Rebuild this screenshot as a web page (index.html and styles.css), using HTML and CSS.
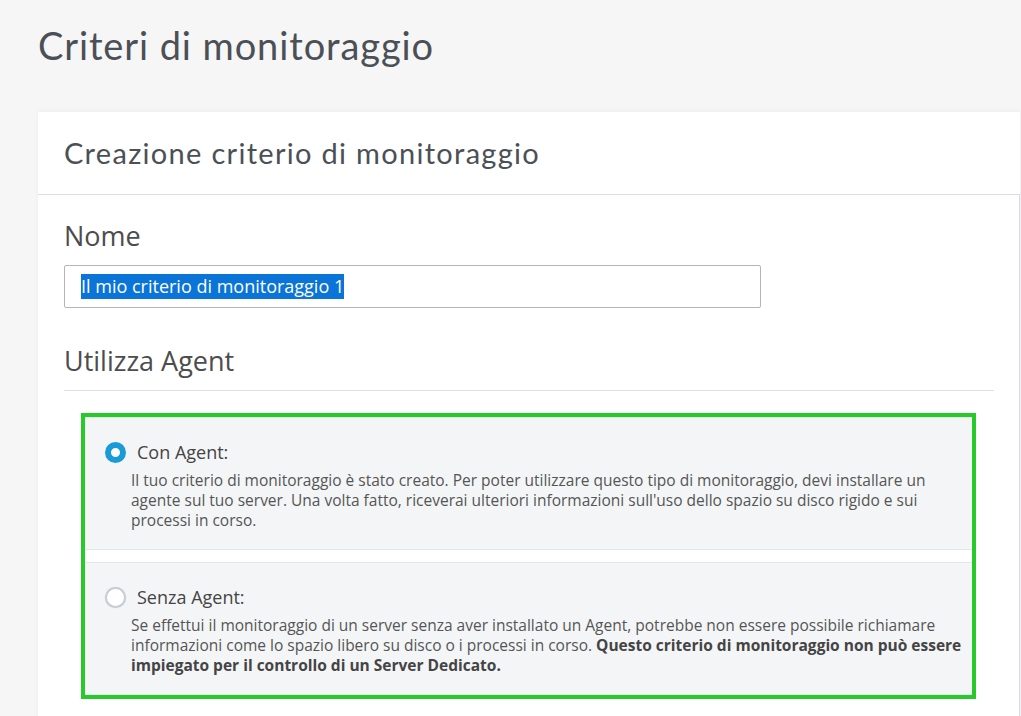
FILE: index.html
```html
<html>
<head>
    <meta charset="UTF-8">
    <meta name="viewport" content="width=device-width, initial-scale=1.0">
    <title>Criteri di monitoraggio</title>
    <link rel="stylesheet" href="styles.css">
</head>
<body>
    <h1 class="page-title">Criteri di monitoraggio</h1>

    <div class="card">
        <div class="card-header">
            <h2>Creazione criterio di monitoraggio</h2>
        </div>

        <div class="card-body">
            <label class="field-label" for="policyName">Nome</label>
            <div class="text-field" id="policyName">
                <span class="selected">Il mio criterio di monitoraggio 1</span>
            </div>

            <h3 class="section-title">Utilizza Agent</h3>

            <div class="agent-options">
                <div class="option">
                    <div class="option-head">
                        <span class="radio checked"></span>
                        <span class="option-label">Con Agent:</span>
                    </div>
                    <p class="option-text">Il tuo criterio di monitoraggio è stato creato. Per poter utilizzare questo tipo di monitoraggio, devi installare un agente sul tuo server. Una volta fatto, riceverai ulteriori informazioni sull'uso dello spazio su disco rigido e sui processi in corso.</p>
                </div>

                <div class="option">
                    <div class="option-head">
                        <span class="radio"></span>
                        <span class="option-label">Senza Agent:</span>
                    </div>
                    <p class="option-text">Se effettui il monitoraggio di un server senza aver installato un Agent, potrebbe non essere possibile richiamare informazioni come lo spazio libero su disco o i processi in corso. <strong>Questo criterio di monitoraggio non può essere impiegato per il controllo di un Server Dedicato.</strong></p>
                </div>
            </div>
        </div>
    </div>
</body>
</html>
```

FILE: styles.css
```css
body {
    margin: 0;
    padding: 0 0 0 38px;
    background-color: #f6f6f6;
    font-family: 'Open Sans', 'Liberation Sans', sans-serif;
    color: #4a4a4a;
    overflow: hidden;
}

.page-title {
    margin: 0;
    padding-top: 22px;
    font-family: Lato, 'Open Sans', sans-serif;
    font-weight: 400;
    font-size: 38px;
    line-height: 46px;
    letter-spacing: 0.9px;
    color: #4b5057;
}

.card {
    margin-top: 44px;
    width: 982px;
    background: white;
    box-shadow: 0 -1px 4px rgba(0,0,0,0.04);
}

.card-header {
    padding: 23px 26px 24px;
    border-bottom: 1px solid #d9dee4;
}

.card-header h2 {
    margin: 0;
    font-family: Lato, 'Open Sans', sans-serif;
    font-weight: 400;
    font-size: 29px;
    line-height: 35px;
    letter-spacing: 1.3px;
    color: #4b5057;
}

.card-body {
    padding: 23px 25px 40px 26px;
    border-right: 1px solid #d6dbe1;
}

.field-label {
    display: block;
    font-size: 27px;
    line-height: 36px;
    font-weight: 400;
    color: #4d4d4d;
    margin-bottom: 11px;
}

.text-field {
    box-sizing: border-box;
    width: 697px;
    height: 43px;
    padding-left: 16px;
    border: 1px solid #b5b5b5;
    border-radius: 2px;
    display: flex;
    align-items: center;
    font-size: 18px;
    line-height: 25px;
}

.selected {
    background: #0a74d8;
    color: white;
}

.section-title {
    margin: 35px 0 0;
    padding-bottom: 11px;
    border-bottom: 1px solid #dde1e6;
    font-size: 27px;
    line-height: 36px;
    font-weight: 400;
    color: #4d4d4d;
}

.agent-options {
    margin: 22px 18px 0 17px;
    border: 4px solid #27c92b;
    display: flex;
    flex-direction: column;
    gap: 12px;
}

.option {
    background: #f4f5f7;
    border-top: 1px solid #e2e5e9;
    border-bottom: 1px solid #e2e5e9;
    padding: 22px 8px 19px 20px;
}

.option-head {
    display: flex;
    align-items: center;
    gap: 11px;
}

.radio {
    box-sizing: border-box;
    width: 21px;
    height: 21px;
    border-radius: 50%;
    background: white;
    border: 2px solid #c7cdd5;
    box-shadow: 0 0 1px rgba(0,0,0,0.15);
}

.radio.checked {
    border: 6.5px solid #1a9ad6;
    box-shadow: none;
}

.option-label {
    font-size: 18px;
    line-height: 24px;
    color: #444;
}

.option-text {
    margin: 6px 0 0 26px;
    font-size: 15.5px;
    line-height: 20px;
    color: #555;
}

.option-text strong {
    font-weight: 700;
    color: #444;
}
```
